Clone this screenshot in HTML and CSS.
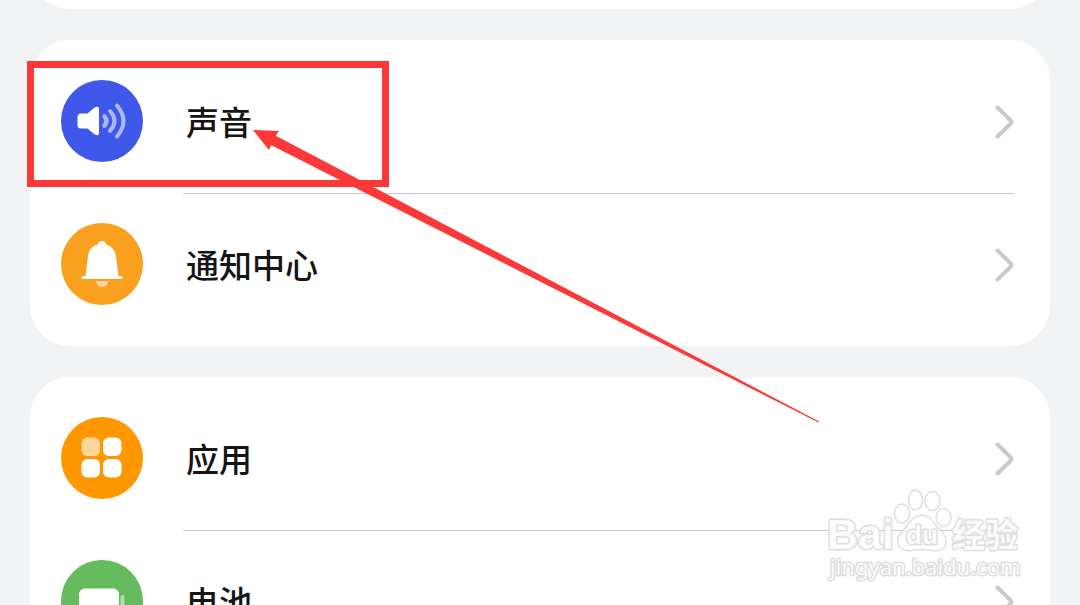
FILE: index.html
```html
<!DOCTYPE html>
<html lang="zh-CN">
<head>
<meta charset="utf-8">
<meta name="viewport" content="width=device-width, initial-scale=1">
<title>设置</title>
<link rel="stylesheet" href="styles.css">
</head>
<body>
<main class="settings">
  <section class="card card-scrolled"></section>

  <nav class="card">
    <a class="row" href="#sound">
      <svg class="icon" viewBox="0 0 82 82" aria-hidden="true">
        <circle cx="41" cy="41" r="41" fill="#3f58e9"/>
        <path d="M20 33.500H26.500L33 28Q38 25 38 29V53Q38 57 33 54L26.500 48.500H20Q16.500 48.500 16.500 45V37Q16.500 33.500 20 33.500Z" fill="#fff"/>
        <g fill="none" stroke="#acb7f8" stroke-width="4" stroke-linecap="round">
          <path d="M43.500 36.500Q47.500 41 43.500 45.500" stroke-width="4.500"/>
          <path d="M49 31Q58 41 49 51"/>
          <path d="M56 25.500Q69 41 56 56.500"/>
        </g>
      </svg>
      <span class="row-body"><span class="label">声音</span>
        <svg class="chevron" viewBox="0 0 19 34" aria-hidden="true"><path d="M2.500 2.500L15.800 15.500Q17 17 15.800 18.500L2.500 31.500"/></svg>
      </span>
    </a>
    <a class="row" href="#notifications">
      <svg class="icon" viewBox="0 0 82 82" aria-hidden="true">
        <circle cx="41" cy="41" r="41" fill="#f9a11f"/>
        <path d="M24.500 53L27 33Q28 24 36.500 21.500Q37.500 18 41 18Q44 18 45.500 21.500Q54 25 55 33L57.500 53H60Q61.500 53 61.500 54.500T60 56H22Q20.500 56 20.500 54.500T22 53Z" fill="#fff"/>
        <path d="M35 58H47.500Q46 64 41 64T35 58Z" fill="#fcd69f"/>
      </svg>
      <span class="row-body"><span class="label">通知中心</span>
        <svg class="chevron" viewBox="0 0 19 34" aria-hidden="true"><path d="M2.500 2.500L15.800 15.500Q17 17 15.800 18.500L2.500 31.500"/></svg>
      </span>
    </a>
  </nav>

  <nav class="card">
    <a class="row" href="#apps">
      <svg class="icon" viewBox="0 0 82 82" aria-hidden="true">
        <circle cx="41" cy="41" r="41" fill="#ff9800"/>
        <rect x="20.500" y="20.500" width="18.500" height="18.500" rx="6" fill="#ffd699"/>
        <g fill="#fff">
          <rect x="42" y="20.500" width="18.500" height="18.500" rx="6"/>
          <rect x="20.500" y="42" width="18.500" height="18.500" rx="6"/>
          <rect x="42" y="42" width="18.500" height="18.500" rx="6"/>
        </g>
      </svg>
      <span class="row-body"><span class="label">应用</span>
        <svg class="chevron" viewBox="0 0 19 34" aria-hidden="true"><path d="M2.500 2.500L15.800 15.500Q17 17 15.800 18.500L2.500 31.500"/></svg>
      </span>
    </a>
    <a class="row" href="#battery">
      <svg class="icon" viewBox="0 0 82 82" aria-hidden="true">
        <circle cx="41" cy="41" r="41" fill="#65bb5d"/>
        <rect x="18" y="28.500" width="40" height="26" rx="6" fill="#fff"/>
        <rect x="59.500" y="35" width="4" height="13" rx="2" fill="#b2ddae"/>
      </svg>
      <span class="row-body"><span class="label">电池</span>
        <svg class="chevron" viewBox="0 0 19 34" aria-hidden="true"><path d="M2.500 2.500L15.800 15.500Q17 17 15.800 18.500L2.500 31.500"/></svg>
      </span>
    </a>
  </nav>
</main>

<svg class="overlay" width="1080" height="605" viewBox="0 0 1080 605">
  <g class="watermark">
    <ellipse cx="902" cy="513.500" rx="7.500" ry="9.500"/>
    <ellipse cx="915.500" cy="500" rx="7" ry="10"/>
    <ellipse cx="932.500" cy="501" rx="7.500" ry="9.500"/>
    <ellipse cx="943.500" cy="517.500" rx="7.500" ry="9"/>
    <path d="M922 515C931 515 933 523 939 529C945 534 948 540 945 546C942 552 934 551 929 550Q922 549 914 550C907 552 900 550 898 544C896 537 901 533 906 527C911 521 914 515 922 515Z"/>
    <text class="brand" x="827" y="549">Bai</text>
    <text class="brand-inner" x="906" y="544">du</text>
    <text class="brand-cn" x="952" y="547">经验</text>
    <text class="site" x="830" y="575">jingyan.baidu.com</text>
  </g>
  <rect class="highlight" x="30.500" y="64.500" width="355" height="119"/>
  <path class="arrow" d="M253 130L279 131L275.700 135.700L819 421.500L818.500 422.500L271.300 145.300L268.700 149.700Z"/>
</svg>
</body>
</html>
```
FILE: styles.css
```css
* {
  box-sizing: border-box;
}

body {
  margin: 0;
  height: 100vh;
  overflow: hidden;
  position: relative;
  background: #f1f3f5;
  color: #151515;
  font-family: "Noto Sans CJK SC", sans-serif;
}

.settings {
  display: flex;
  flex-direction: column;
  gap: 31px;
  height: 100%;
  overflow: hidden;
  padding: 0 30px;
}

.card {
  flex: none;
  padding: 11px 0 9px;
  border-radius: 40px;
  background: #fff;
}

/* The preceding group, scrolled almost out of view. */
.card-scrolled {
  height: 100px;
  margin-top: -91px;
}

.row {
  display: flex;
  gap: 40px;
  padding: 0 36px 0 31px;
  color: inherit;
  text-decoration: none;
}

.icon {
  flex: none;
  width: 82px;
  height: 82px;
  margin: 29px 0 32px;
}

.row-body {
  flex: 1;
  display: flex;
  align-items: center;
  justify-content: space-between;
  border-bottom: 1px solid transparent;
}

.row:not(:last-child) .row-body {
  border-bottom-color: #c9c9c9;
}

.label {
  padding: 0 0 2px 3px;
  font-size: 33px;
  line-height: 48px;
  font-weight: 500;
}

.chevron {
  width: 19px;
  height: 34px;
  fill: none;
  stroke: #cacaca;
  stroke-width: 4;
  stroke-linecap: round;
  stroke-linejoin: round;
}

.overlay {
  position: absolute;
  top: 0;
  left: 0;
  pointer-events: none;
}

.highlight {
  fill: none;
  stroke: #fc3838;
  stroke-width: 7;
}

.arrow {
  fill: #fc3838;
}

.watermark {
  fill: rgba(255, 255, 255, 0.6);
  stroke: #dedede;
  stroke-width: 1.5;
}

.watermark text {
  fill: rgba(255, 255, 255, 0.85);
  stroke-width: 3;
  stroke-linejoin: round;
  paint-order: stroke;
}

.brand,
.brand-inner {
  font-family: "Liberation Sans", sans-serif;
  font-weight: 700;
  font-size: 43px;
}

.brand-inner {
  font-size: 26px;
}

.brand-cn {
  font-weight: 700;
  font-size: 33px;
}

.site {
  font-family: "Noto Sans", sans-serif;
  font-size: 22px;
}
```
